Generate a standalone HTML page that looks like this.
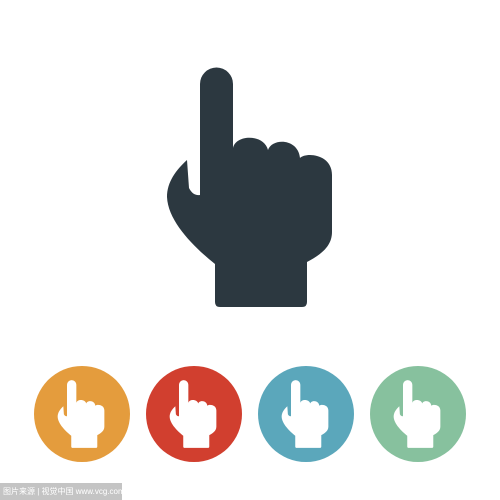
<!DOCTYPE html>
<html><head><style>
html,body{margin:0;padding:0;background:#fff;width:500px;height:500px;overflow:hidden;position:relative}
.wm{position:absolute;left:0;top:483px;width:122px;height:17px;background:#c4c4c4;color:#fff;font:8px "Liberation Sans","Noto Sans CJK SC",sans-serif;line-height:17px;padding-left:3px;box-sizing:border-box;white-space:nowrap}
</style></head><body>
<svg width="500" height="500" style="position:absolute;left:0;top:0">
<defs>
<path id="h" d="M200,84 A16.5,16.5 0 0 1 233,84 L233,148 C236,134 264,134 268,150 C272,138 298,138 300,158 C306,152 332,154 332,175 L332,232 C332,248 318,256 307,262 L307,302 Q307,307 302,307 L220,307 Q215,307 215,302 L215,264 C195,248 168,222 167,197 C167,182 176,170 187,160 L189,188 Q193,196 200,195 Z"/>
</defs>
<use href="#h" fill="#2c3840"/>
<circle cx="82" cy="414" r="48" fill="#e49c3d"/>
<circle cx="194" cy="414" r="48" fill="#d13f2f"/>
<circle cx="306" cy="414" r="48" fill="#5ba7bb"/>
<circle cx="418" cy="414" r="48" fill="#87c19e"/>
<use href="#h" fill="#fff" transform="translate(10.4,361) scale(0.283)"/>
<use href="#h" fill="#fff" transform="translate(122.4,361) scale(0.283)"/>
<use href="#h" fill="#fff" transform="translate(234.4,361) scale(0.283)"/>
<use href="#h" fill="#fff" transform="translate(346.4,361) scale(0.283)"/>
</svg>
<div class="wm">图片来源 | 视觉中国 www.vcg.com</div>
</body></html>
